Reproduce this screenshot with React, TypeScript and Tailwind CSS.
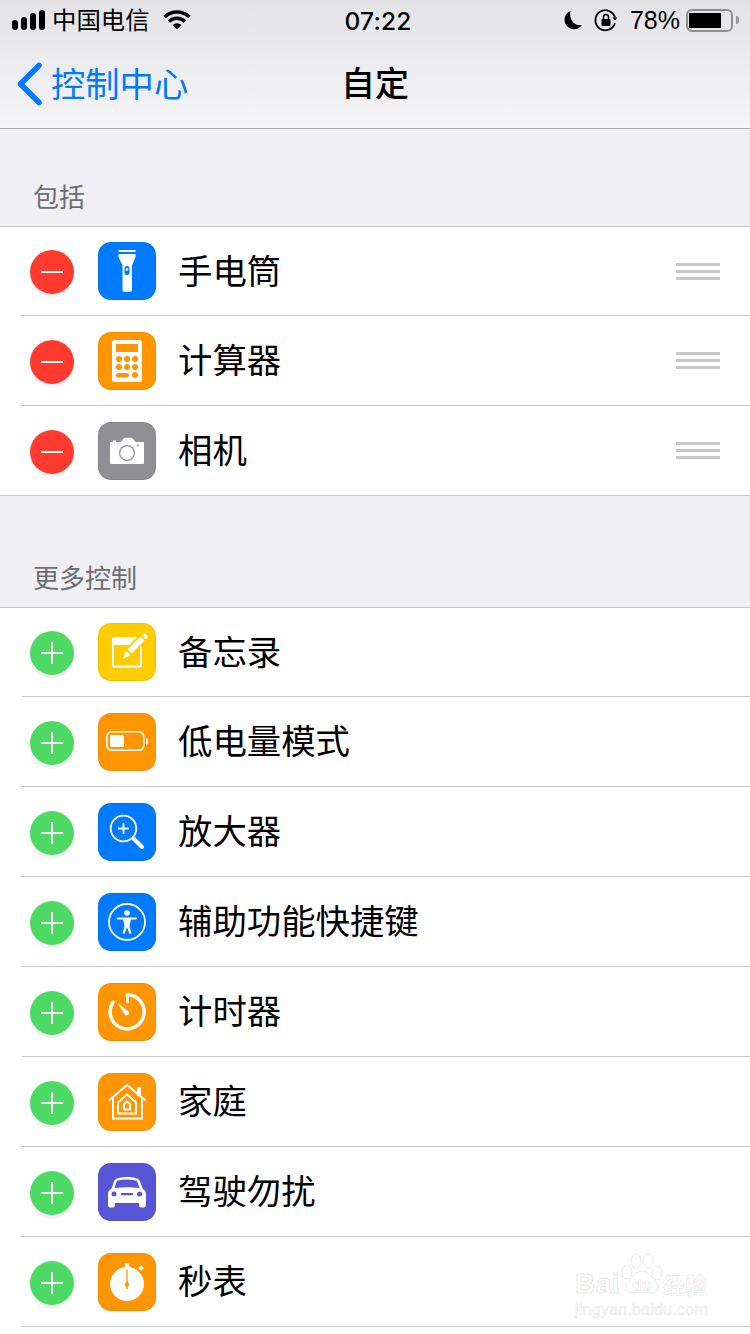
import React from 'react';

const CJK = "font-['Noto_Sans_CJK_SC','Noto_Sans_CJK_JP',sans-serif]";

function Flashlight() {
  return (
    <svg viewBox="0 0 58 58" className="w-[58px] h-[58px]">
      <rect x="20.500" y="8" width="17" height="2" fill="#fff" />
      <path d="M20.500 12h17v3l-3.500 8.500V48a2 2 0 0 1-2 2h-5.500a2 2 0 0 1-2-2V23.500l-4-8.500z" fill="#fff" />
      <rect x="26.500" y="24" width="5" height="9" rx="2.500" fill="#007aff" />
      <circle cx="29" cy="27.500" r="1.300" fill="#fff" />
    </svg>
  );
}

function Calculator() {
  const dots = [
    [21, 27], [29, 27], [37, 27],
    [21, 35], [29, 35], [37, 35], [37, 43],
  ];
  return (
    <svg viewBox="0 0 58 58" className="w-[58px] h-[58px]">
      <rect x="14" y="8" width="30" height="42" rx="2.500" fill="#fff" />
      <rect x="18" y="12" width="22" height="8" fill="#ff9500" />
      {dots.map(([x, y]) => (
        <circle key={`${x}-${y}`} cx={x} cy={y} r="3" fill="#ff9500" />
      ))}
      <rect x="18" y="41" width="13" height="4.500" rx="2.200" fill="#ff9500" />
    </svg>
  );
}

function Camera() {
  return (
    <svg viewBox="0 0 58 58" className="w-[58px] h-[58px]">
      <path d="M13 20h2v-1.500h3V20h5l2.500-3.500a1.500 1.500 0 0 1 1.200-.7h6.600a1.500 1.500 0 0 1 1.200.7L38 20h7a1 1 0 0 1 1 1v20a1 1 0 0 1-1 1H13a1 1 0 0 1-1-1V21a1 1 0 0 1 1-1z" fill="#fff" />
      <circle cx="29" cy="31" r="8" fill="#8e8e93" />
      <circle cx="29" cy="31" r="6.800" fill="#fff" />
      <circle cx="40" cy="23.500" r="1" fill="#8e8e93" />
    </svg>
  );
}

function Notes() {
  return (
    <svg viewBox="0 0 58 58" className="w-[58px] h-[58px]">
      <path d="M15 20h28v22a1.500 1.500 0 0 1-1.500 1.500h-25A1.500 1.500 0 0 1 15 42z" fill="none" stroke="#fff" strokeWidth="2" />
      <path d="M14 16a2 2 0 0 1 2-2h26l-6 8H14z" fill="#fff" />
      <path d="M25 35l3-8 16-16a3 3 0 0 1 5 5L33 32z" fill="#ffcc00" stroke="#ffcc00" strokeWidth="2.500" />
      <path d="M25 35.500l3-7.500 4.500 4.500z" fill="#fff" />
      <path d="M29.500 26.500l13-13 4 4-13 13z" fill="#fff" />
      <path d="M44 12.500l.8-.8a2.600 2.600 0 0 1 3.800 3.800l-.8.8z" fill="#fff" />
    </svg>
  );
}

function LowPower() {
  return (
    <svg viewBox="0 0 58 58" className="w-[58px] h-[58px]">
      <rect x="8.800" y="18.800" width="37" height="18.500" rx="5" fill="none" stroke="#fff" strokeWidth="1.600" />
      <rect x="12" y="22" width="14" height="12" rx="2" fill="#fff" />
      <path d="M48 25c1.500.3 2 1.200 2 3.500s-.5 3.200-2 3.500z" fill="#fff" />
    </svg>
  );
}

function Magnifier() {
  return (
    <svg viewBox="0 0 58 58" className="w-[58px] h-[58px]" fill="none" stroke="#fff">
      <circle cx="25.500" cy="25.500" r="12.800" strokeWidth="1.800" />
      <path d="M25.500 20v11M20 25.500h11" strokeWidth="1.800" />
      <path d="M35.500 35.500l8.500 8.500" strokeWidth="4" strokeLinecap="round" />
    </svg>
  );
}

function Accessibility() {
  return (
    <svg viewBox="0 0 58 58" className="w-[58px] h-[58px]" fill="none">
      <circle cx="29" cy="29" r="18" stroke="#fff" strokeWidth="1.800" />
      <circle cx="29" cy="20" r="2.800" fill="#fff" />
      <path d="M20 25.500h18" stroke="#fff" strokeWidth="2.200" strokeLinecap="round" />
      <path d="M25 25.500h8l-1.500 8 2 7-2 .5-2.500-7-2.500 7-2-.5 2-7z" fill="#fff" />
    </svg>
  );
}

function TimerIcon() {
  return (
    <svg viewBox="0 0 58 58" className="w-[58px] h-[58px]" fill="none">
      <path d="M29 11.800a17 17 0 1 1-14 7.500" stroke="#fff" strokeWidth="3.500" strokeLinecap="round" />
      <path d="M29.500 12v8" stroke="#fff" strokeWidth="2.500" />
      <path d="M19.500 20l11 8.500a2.500 2.500 0 0 1-3.500 3.500z" fill="#fff" />
    </svg>
  );
}

function HomeIcon() {
  return (
    <svg viewBox="0 0 58 58" className="w-[58px] h-[58px]" fill="none" stroke="#fff">
      <path d="M11 27.500l18-15.500 18.500 15.500" strokeWidth="2" />
      <path d="M15 25v20.500h29V25" strokeWidth="2" />
      <path d="M20 29.500l9-8 9 8V40.500H20z" strokeWidth="2" />
      <path d="M26 31l3-2.500 3 2.500v5.500h-6z" strokeWidth="2" />
      <rect x="39" y="14" width="4" height="9" fill="#fff" stroke="none" />
    </svg>
  );
}

function Car() {
  return (
    <svg viewBox="0 0 58 58" className="w-[58px] h-[58px]">
      <path d="M19 15.500c3-1 6.500-1.500 10-1.500s7 .5 10 1.500c1.500.5 2.500 1.700 3 3l2.500 7c2 1.500 3.500 3 3.500 5V42a2.500 2.500 0 0 1-2.500 2.500h-2A2.500 2.500 0 0 1 41 42v-2H17v2a2.500 2.500 0 0 1-2.500 2.500h-2A2.500 2.500 0 0 1 10 42V30.500c0-2 1.500-3.500 3.500-5l2.500-7c.5-1.300 1.500-2.500 3-3z" fill="#fff" />
      <path d="M20 17.500c6-1.300 12-1.300 18 0 1 .3 1.300.8 1.500 1.500l2 6c-8.500-1-16.500-1-25 0l2-6c.2-.7.500-1.200 1.500-1.500z" fill="#5856d6" />
      <circle cx="16" cy="31" r="2.500" fill="#5856d6" />
      <circle cx="41.500" cy="31" r="2.500" fill="#5856d6" />
      <rect x="23" y="30" width="12" height="2.200" rx="1" fill="#5856d6" />
    </svg>
  );
}

function Stopwatch() {
  return (
    <svg viewBox="0 0 58 58" className="w-[58px] h-[58px]">
      <circle cx="29" cy="31" r="17" fill="#fff" />
      <rect x="26.800" y="10" width="4.500" height="6" rx="1" fill="#fff" />
      <rect x="41" y="13" width="4" height="4" transform="rotate(45 43 15)" fill="#fff" />
      <rect x="28.400" y="17" width="1.200" height="19" fill="#ff9500" />
      <path d="M29 28l2.500 3.500-1.800 2.500v2h-1.400v-2l-1.800-2.500z" fill="#ff9500" />
    </svg>
  );
}

const INCLUDED = [
  { name: '手电筒', bg: 'bg-[#007aff]', icon: <Flashlight /> },
  { name: '计算器', bg: 'bg-[#ff9500]', icon: <Calculator /> },
  { name: '相机', bg: 'bg-[#8e8e93]', icon: <Camera /> },
];

const MORE = [
  { name: '备忘录', bg: 'bg-[#ffcc00]', icon: <Notes /> },
  { name: '低电量模式', bg: 'bg-[#ff9500]', icon: <LowPower /> },
  { name: '放大器', bg: 'bg-[#007aff]', icon: <Magnifier /> },
  { name: '辅助功能快捷键', bg: 'bg-[#007aff]', icon: <Accessibility /> },
  { name: '计时器', bg: 'bg-[#ff9500]', icon: <TimerIcon /> },
  { name: '家庭', bg: 'bg-[#ff9500]', icon: <HomeIcon /> },
  { name: '驾驶勿扰', bg: 'bg-[#5856d6]', icon: <Car /> },
  { name: '秒表', bg: 'bg-[#ff9500]', icon: <Stopwatch /> },
];

function Row({ item, kind, first, last }: { item: { name: string; bg: string; icon: React.ReactNode }; kind: 'remove' | 'add'; first: boolean; last: boolean }) {
  return (
    <div className={`pl-[22px] ${first || last ? 'h-[89px]' : 'h-[90px]'}`}>
      <div className={`flex h-full items-center pr-[30px] ${last ? '' : 'border-b border-[#c8c7cc]'}`}>
        {kind === 'remove' ? (
          <div className="ml-2 mt-0.5 flex h-11 w-11 shrink-0 items-center justify-center rounded-full bg-[#ff3b30] shadow-[0_4px_1px_rgba(0,0,0,0.05)]">
            <div className="h-0.5 w-[22px] bg-white" />
          </div>
        ) : (
          <div className="relative ml-2 mt-0.5 flex h-11 w-11 shrink-0 items-center justify-center rounded-full bg-[#4cd964] shadow-[0_4px_1px_rgba(0,0,0,0.05)]">
            <div className="h-0.5 w-[22px] bg-white" />
            <div className="absolute h-[22px] w-0.5 bg-white" />
          </div>
        )}
        <div className={`ml-6 h-[58px] w-[58px] shrink-0 overflow-hidden rounded-[13px] shadow-[inset_0_0_0_1px_rgba(0,0,0,0.05)] ${item.bg}`}>{item.icon}</div>
        <div className={`ml-[22px] flex-1 pb-1 text-[34.400px] leading-none text-black ${CJK}`}>{item.name}</div>
        {kind === 'remove' && (
          <div className="flex w-11 flex-col gap-1">
            <div className="h-[3px] bg-[#c7c7cc]" />
            <div className="h-[3px] bg-[#c7c7cc]" />
            <div className="h-[3px] bg-[#c7c7cc]" />
          </div>
        )}
      </div>
    </div>
  );
}

function SectionTitle({ title, height }: { title: string; height: string }) {
  return <div className={`flex items-end px-[33px] pb-[13px] ${height} text-[26px] leading-[34px] text-[#6d6d72] ${CJK}`}>{title}</div>;
}

function Watermark() {
  return (
    <div className="absolute left-[575px] top-[1253px] h-[66px] w-[140px] font-['Liberation_Sans',sans-serif] text-white">
      <svg viewBox="0 0 140 66" className="absolute inset-0 h-full w-full" fill="#fff" stroke="#e8e8e8" strokeWidth="1">
        <ellipse cx="61" cy="8" rx="5" ry="7" />
        <ellipse cx="73" cy="8" rx="5" ry="7" />
        <ellipse cx="52" cy="19" rx="5" ry="7" />
        <ellipse cx="82" cy="20" rx="5" ry="7" />
        <path d="M67 18c6 0 9 6 13 10 5 5 3 12-4 12-4 0-6-1-9-1s-5 1-9 1c-7 0-9-7-4-12 4-4 7-10 13-10z" />
      </svg>
      <div className="absolute left-0 top-[17px] text-[28px] font-bold leading-none tracking-[0.5px] text-white [-webkit-text-stroke:1px_#e8e8e8]">Bai</div>
      <div className="absolute left-[57px] top-[25px] text-[16px] font-bold leading-none text-white [-webkit-text-stroke:0.6px_#e8e8e8]">du</div>
      <div className={`absolute left-[88px] top-[19px] text-[22px] font-bold leading-none text-white [-webkit-text-stroke:0.6px_#e8e8e8] ${CJK}`}>经验</div>
      <div className="absolute left-0 top-[48px] text-[16.500px] leading-none text-white [-webkit-text-stroke:0.6px_#e8e8e8]">jingyan.baidu.com</div>
    </div>
  );
}

export default function App() {
  return (
    <div className="relative h-[1334px] w-[750px] overflow-hidden bg-[#efeff4]">
      <header className="h-[129px] border-b border-[#a9a9ad] bg-gradient-to-b from-[#e3e3e5] to-[#f5f5f7]">
        <div className="flex h-10 items-center justify-between pl-3 pr-[11px] text-black">
          <div className="flex items-center">
            <div className="flex items-end gap-[3px]">
              <div className="h-[10px] w-[6px] rounded-full bg-black" />
              <div className="h-[13px] w-[6px] rounded-full bg-black" />
              <div className="h-[17px] w-[6px] rounded-full bg-black" />
              <div className="h-[20px] w-[6px] rounded-full bg-black" />
            </div>
            <span className={`ml-[7px] pb-0.5 text-[24.400px] leading-none ${CJK}`}>中国电信</span>
            <svg viewBox="0 0 28 20" className="ml-[13px] h-[20px] w-[28px]" fill="none" stroke="#000" strokeWidth="3.400">
              <path d="M1.500 7a18 18 0 0 1 25 0" />
              <path d="M6 11.500a11.500 11.500 0 0 1 16 0" />
              <path d="M14 19.500l-4.500-4.500a6.500 6.500 0 0 1 9 0z" fill="#000" stroke="none" />
            </svg>
          </div>
          <span className="absolute left-[344.500px] top-[7px] font-['Inter',sans-serif] text-[24.500px] font-medium leading-[28px] tracking-[0.2px]">07:22</span>
          <div className="flex items-center">
            <svg viewBox="0 0 20 20" className="h-5 w-5">
              <path d="M7.500 1a9.500 9.500 0 1 0 11.500 14C12 16.500 5.500 10 7.500 1z" fill="#000" />
            </svg>
            <svg viewBox="0 0 24 24" className="ml-[11px] h-6 w-6" fill="none" stroke="#000" strokeWidth="1.800">
              <path d="M21 9.500A10 10 0 1 0 21 15" />
              <path d="M18.500 9.500h5l-2.500 3z" fill="#000" stroke="none" />
              <rect x="7.500" y="11" width="9" height="7" rx="1" fill="#000" stroke="none" />
              <path d="M9.500 11V9a2.500 2.500 0 0 1 5 0v2" strokeWidth="1.500" />
            </svg>
            <span className="ml-[12px] font-['Liberation_Sans',sans-serif] text-[25px] leading-none">78%</span>
            <div className="ml-[6px] h-[23px] w-[47px] rounded-[6px] border-2 border-[#8e8e8e] px-px py-0.5">
              <div className="h-full w-[32px] bg-black" />
            </div>
            <div className="ml-[3px] h-2 w-[3px] rounded-r-full bg-[#999]" />
          </div>
        </div>
        <div className="grid h-[88px] grid-cols-[1fr_auto_1fr] items-center">
          <div className="flex items-center pl-[17px] text-[#007aff]">
            <svg viewBox="0 0 26 44" className="h-[44px] w-[26px]" fill="none" stroke="#007aff" strokeWidth="5.500" strokeLinecap="round" strokeLinejoin="round">
              <path d="M22 3.500L3.500 22 22 40.500" />
            </svg>
            <span className={`ml-[8px] pb-1 text-[34.300px] leading-none ${CJK}`}>控制中心</span>
          </div>
          <span className={`pb-1 text-[34px] font-medium leading-none text-black ${CJK}`}>自定</span>
          <div />
        </div>
      </header>
      <SectionTitle title="包括" height="h-[97px]" />
      <div className="border-y border-[#c8c7cc] bg-white">
        {INCLUDED.map((item, i) => (
          <Row key={item.name} item={item} kind="remove" first={i === 0} last={i === INCLUDED.length - 1} />
        ))}
      </div>
      <SectionTitle title="更多控制" height="h-[111px]" />
      <div className="border-t border-[#c8c7cc] bg-white pb-[10px]">
        {MORE.map((item, i) => (
          <Row key={item.name} item={item} kind="add" first={i === 0} last={false} />
        ))}
      </div>
      <Watermark />
    </div>
  );
}
